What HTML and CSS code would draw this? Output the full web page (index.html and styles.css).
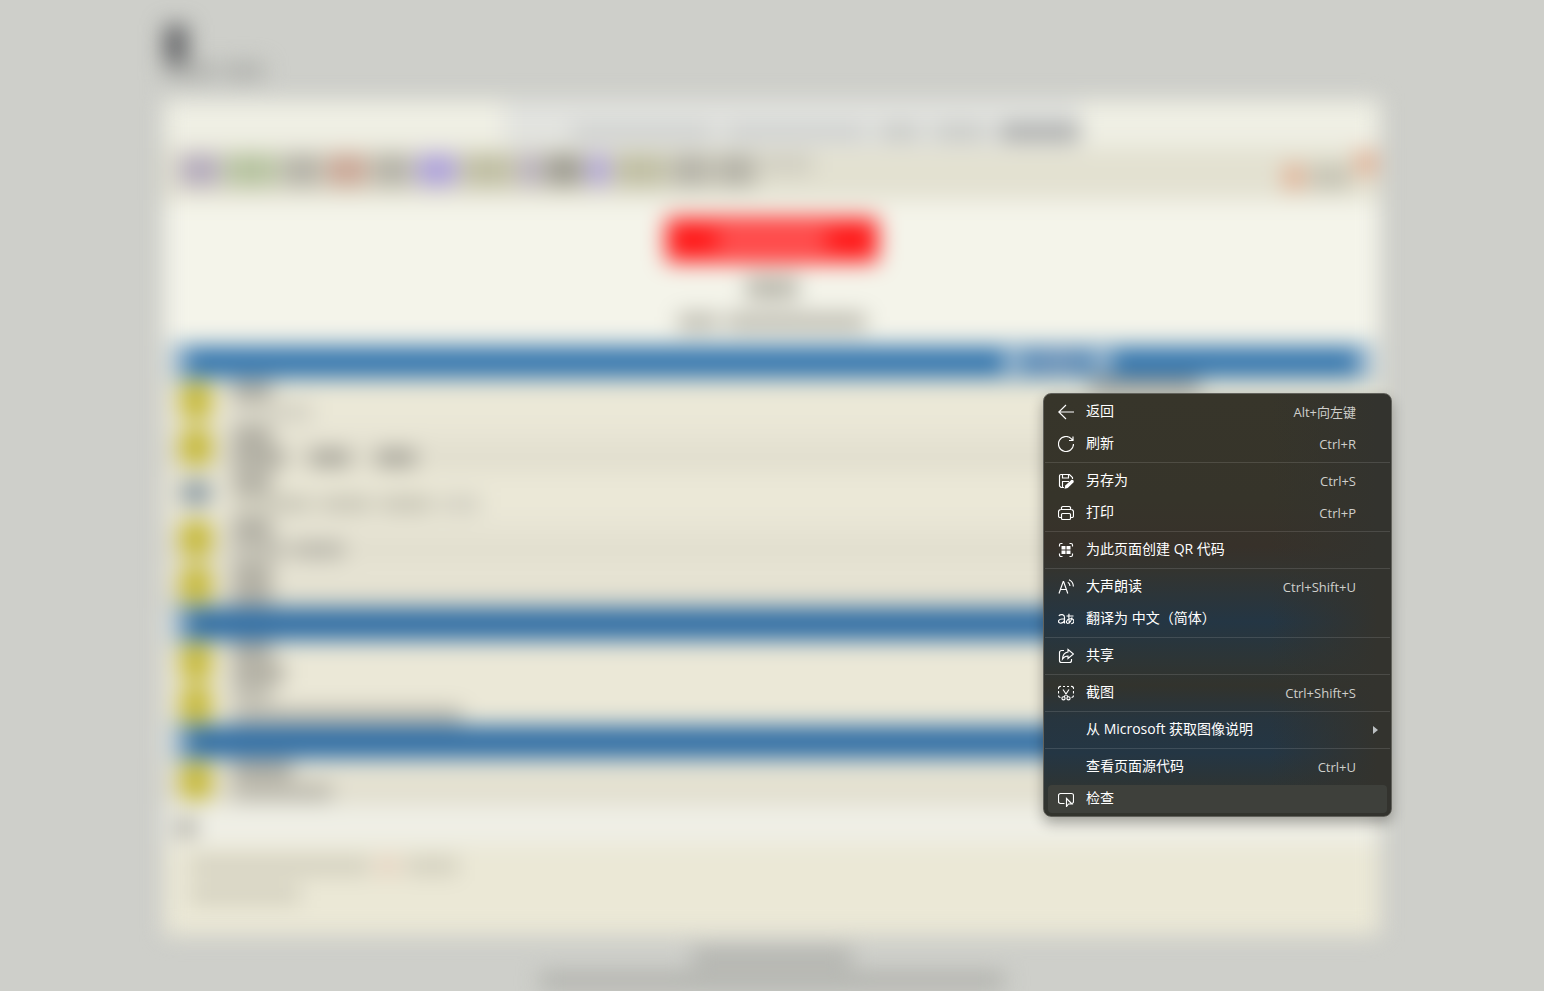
FILE: index.html
```html
<!DOCTYPE html>
<html lang="zh-CN">
<head>
<meta charset="utf-8">
<title>右键菜单</title>
<link rel="stylesheet" href="styles.css">
</head>
<body>
<div class="page" aria-hidden="true">
  <header class="masthead">
    <i class="smudge logo"></i>
    <div class="line tagline"><i class="smudge w50"></i><i class="smudge w40"></i></div>
  </header>
  <main class="panel">
    <div class="notice"><div class="notice-tint">
      <i class="smudge w150 pale"></i><i class="smudge w150 pale"></i><i class="smudge w40"></i><i class="smudge w50 mid"></i><i class="smudge w80 dark"></i>
    </div></div>
    <div class="nav">
      <div class="nav-links">
        <i class="smudge w40 violet"></i><i class="smudge w50 green"></i><i class="smudge w40 mid"></i><i class="smudge w40 rust"></i><i class="smudge w40 mid"></i><i class="smudge w40 purple"></i><i class="smudge w50 olive"></i><i class="smudge w20 violet"></i><i class="smudge w40 dark"></i><i class="smudge w20 purple"></i><i class="smudge w50 olive"></i><i class="smudge w40 mid"></i><i class="smudge w40 mid"></i><i class="smudge w50 pale high"></i>
      </div>
      <div class="nav-user"><i class="smudge w20 orange"></i><i class="smudge w40"></i><i class="smudge w20 orange high"></i></div>
    </div>
    <section class="hero">
      <div class="cta"><i class="cta-text"></i></div>
      <i class="smudge w50 mid tall"></i>
      <div class="line"><i class="smudge w40 mid"></i><i class="smudge w150 mid"></i></div>
    </section>
    <div class="bar"><i class="bar-start"></i><i class="bar-fill"></i><i class="bar-text w20"></i><i class="bar-dark w50"></i><i class="bar-text w20"></i><i class="bar-rest"></i><i class="bar-start"></i></div>
    <section class="group">
      <div class="row"><i class="badge"></i><div class="copy"><i class="smudge w40 dark"></i><i class="smudge w80 pale"></i></div><i class="smudge w110 dark last-post"></i></div>
      <div class="row shade"><i class="badge"></i><div class="copy"><i class="smudge w40 dark"></i><div class="line spread"><i class="smudge w50 dark"></i><i class="smudge w40 dark"></i><i class="smudge w40 dark"></i></div></div></div>
      <div class="row"><i class="badge read"></i><div class="copy"><i class="smudge w40 dark"></i><div class="line"><i class="smudge w80"></i><i class="smudge w50"></i><i class="smudge w50"></i><i class="smudge w40 pale"></i></div></div></div>
      <div class="row shade"><i class="badge"></i><div class="copy"><i class="smudge w40 dark"></i><div class="line"><i class="smudge w50 mid"></i><i class="smudge w50 mid"></i></div></div></div>
      <div class="row shade"><i class="badge"></i><div class="copy"><i class="smudge w40 dark"></i><i class="smudge w40 dark"></i></div></div>
    </section>
    <div class="bar deep"><i class="bar-start"></i><i class="bar-fill"></i><i class="bar-text w20"></i><i class="bar-rest"></i></div>
    <section class="group compact">
      <div class="row"><i class="badge"></i><div class="copy"><i class="smudge w40 dark"></i><i class="smudge w50 dark"></i></div></div>
      <div class="row"><i class="badge"></i><div class="copy"><i class="smudge w40 mid"></i><i class="smudge w230 mid"></i></div></div>
    </section>
    <div class="bar deep"><i class="bar-start"></i><i class="bar-fill"></i><i class="bar-text w20"></i><i class="bar-rest"></i></div>
    <section class="group">
      <div class="row shade"><i class="badge"></i><div class="copy"><i class="smudge w60 dark"></i><i class="smudge w100 mid"></i></div></div>
    </section>
    <div class="heading"><i class="smudge w20 dark"></i></div>
    <section class="stats">
      <div class="line"><i class="smudge w190"></i><i class="smudge w20 blush"></i><i class="smudge w50"></i></div>
      <i class="smudge w110"></i>
    </section>
  </main>
  <footer class="footer"><i class="smudge w160 dim"></i><i class="smudge w470 dim"></i></footer>
</div>

<div class="menu" role="menu">
  <button class="item" role="menuitem">
    <svg class="icon" viewBox="0 0 16 16"><path d="M8 1 .8 8 8 15M1 8h15"/></svg>
    <span class="label">返回</span><kbd class="keys">Alt+向左键</kbd>
  </button>
  <button class="item" role="menuitem">
    <svg class="icon" viewBox="0 0 16 16"><path d="M15.5 8A7.5 7.5 0 1 1 13.2 2.6L15 4.500M15 .5v4h-4"/></svg>
    <span class="label">刷新</span><kbd class="keys">Ctrl+R</kbd>
  </button>
  <hr class="rule">
  <button class="item" role="menuitem">
    <svg class="icon" viewBox="0 0 16 16"><path d="M6 14.500H3L1.500 13V3A1.500 1.500 0 0 1 3 1.500h8.500L14.500 4.500V6M4.500 1.500V5h6V1.500M4.500 14.500v-6H11"/><path class="solid" d="m6.500 15.800.8-3.300 5.700-5.300c1.600-1.300 3.600.6 2.400 2.200l-5.700 5.500z"/></svg>
    <span class="label">另存为</span><kbd class="keys">Ctrl+S</kbd>
  </button>
  <button class="item" role="menuitem">
    <svg class="icon" viewBox="0 0 16 16"><path d="M3.500 4.500v-1A1.500 1.500 0 0 1 5 1.500h6a1.500 1.500 0 0 1 1.500 2v1M3.500 12.500H2A1.500 1.500 0 0 1 .5 11V7A2.500 2.500 0 0 1 3 4.500h10A2.500 2.500 0 0 1 15.500 7v4a1.500 1.500 0 0 1-1.500 1.500h-1.500"/><rect x="3.500" y="8.500" width="9" height="6" rx="1"/></svg>
    <span class="label">打印</span><kbd class="keys">Ctrl+P</kbd>
  </button>
  <hr class="rule">
  <button class="item" role="menuitem">
    <svg class="icon" viewBox="0 0 16 16"><path d="M4.500 1.500H3A1.500 1.500 0 0 0 1.500 3v1.500M11.500 1.500H13A1.500 1.500 0 0 1 14.500 3v1.500M4.500 14.500H3A1.500 1.500 0 0 1 1.500 13v-1.500M11.500 14.500H13a1.500 1.500 0 0 0 1.500-1.500v-1.500"/><path class="solid" d="M3.500 4h4v3.500h-4zM8.500 4h4v3.500h-4zM3.500 8.500h4V12h-4zM8.500 8.500h4V12h-4z"/></svg>
    <span class="label">为此页面创建 QR 代码</span>
  </button>
  <hr class="rule">
  <button class="item" role="menuitem">
    <svg class="icon" viewBox="0 0 16 16"><path d="m1 14.500 4.200-12h.4l4.200 12M2.500 10.500h5.800M9.800 3.300c1.300.7 2.100 2 2.200 3.700M11 .8c2.600 1.100 4.200 3.700 4.400 6.700"/></svg>
    <span class="label">大声朗读</span><kbd class="keys">Ctrl+Shift+U</kbd>
  </button>
  <button class="item" role="menuitem">
    <svg class="icon" viewBox="0 0 16 16"><path d="M.8 4.700c2-1.700 5.700-1.500 5.700 1.500V12.500M6.500 7.700C3 7.700.5 8.200.5 10.300c0 2.800 5 2.500 6-.8M8.500 5h7M11 2.800c-.3 3.200-.2 6.700.6 9.500M14 6.300c-.8 3.500-2.800 6-4.400 6-2.200 0-1.300-4.300 2.600-4.500 5-.2 4.600 4.500 1 5"/></svg>
    <span class="label">翻译为 中文（简体）</span>
  </button>
  <hr class="rule">
  <button class="item" role="menuitem">
    <svg class="icon" viewBox="0 0 16 16"><path d="M6 2.500H3.500a2 2 0 0 0-2 2v8a2 2 0 0 0 2 2h8a2 2 0 0 0 2-2V11M10 1.500l5.500 4.500L10 10.500V8c-2.500 0-4 .8-5.500 3 .2-4 2-6.500 5.500-7z"/></svg>
    <span class="label">共享</span>
  </button>
  <hr class="rule">
  <button class="item" role="menuitem">
    <svg class="icon" viewBox="0 0 16 16"><path d="M3 1.500A2 2 0 0 0 .5 4M5 1.500h2M9 1.500h2M13 1.500A2 2 0 0 1 15.500 4M.5 6v2.500M15.500 6v2.500M.5 10.500c0 1.500.8 2 2 2M15.500 10.500c0 1.500-.8 2-2 2M5 4.500l5 7.500M11 4.500 6 12"/><circle cx="5.500" cy="13.300" r="1.600"/><circle cx="10.500" cy="13.300" r="1.600"/></svg>
    <span class="label">截图</span><kbd class="keys">Ctrl+Shift+S</kbd>
  </button>
  <hr class="rule">
  <button class="item" role="menuitem" aria-haspopup="true">
    <span class="icon"></span>
    <span class="label">从 Microsoft 获取图像说明</span>
    <svg class="arrow" viewBox="0 0 5 8"><path d="M0 0 5 4 0 8z"/></svg>
  </button>
  <hr class="rule">
  <button class="item" role="menuitem">
    <span class="icon"></span>
    <span class="label">查看页面源代码</span><kbd class="keys">Ctrl+U</kbd>
  </button>
  <button class="item active" role="menuitem">
    <svg class="icon" viewBox="0 0 16 16"><path d="M6.500 12.500h-4a2 2 0 0 1-2-2v-6a2 2 0 0 1 2-2h11a2 2 0 0 1 2 2v6a2 2 0 0 1-1.500 2M8.500 7.500v8l2-2.500h3.500z"/></svg>
    <span class="label">检查</span>
  </button>
</div>
</body>
</html>
```
FILE: styles.css
```css
* { box-sizing: border-box; }

body {
  margin: 0;
  min-height: 100vh;
  overflow: hidden;
  position: relative;
  background: #cecfca;
  font-family: "Open Sans", "Noto Sans CJK SC", sans-serif;
}

/* Out-of-focus page behind the menu */
.page {
  height: 100vh;
  padding: 0 164px;
  filter: blur(11px);
}

.masthead {
  height: 100px;
  padding-top: 25px;
}

.smudge {
  display: block;
  flex: none;
  height: 16px;
  background: #c4c2b3;
}

.smudge.logo { width: 24px; height: 38px; background: #66676a; }
.line { display: flex; gap: 8px; }
.spread { gap: 26px; }
.tagline .smudge { background: #aeafab; }

.w20 { width: 20px; }
.w40 { width: 40px; }
.w50 { width: 52px; }
.w60 { width: 60px; }
.w80 { width: 80px; }
.w100 { width: 100px; }
.w110 { width: 110px; }
.w150 { width: 140px; }
.w160 { width: 160px; }
.w190 { width: 180px; }
.w230 { width: 230px; }
.w470 { width: 464px; }

.pale { background: #cfcdc0; }
.mid { background: #b5b3a8; }
.dark { background: #a09e94; }
.dim { background: #adaea9; }
.violet { background: #b5acbd; }
.purple { background: #afa3db; }
.green { background: #b6c3a0; }
.olive { background: #bfbea3; }
.rust { background: #caa797; }
.orange { background: #e2ae92; }
.tall { height: 22px; }

.panel { background: #f4f4ea; }

.notice {
  display: flex;
  justify-content: center;
  height: 48px;
  padding-left: 40px;
  background: #efefe4;
}

.notice-tint {
  display: flex;
  align-items: flex-end;
  justify-content: flex-end;
  gap: 14px;
  width: 576px;
  padding-bottom: 8px;
  background: #e2e3df;
}

.notice-tint .smudge { background: #c6c8c5; }
.notice-tint .pale { background: #cdcfce; }
.notice-tint .dark { background: #a4a6a6; }

.nav {
  display: flex;
  justify-content: space-between;
  align-items: center;
  height: 52px;
  padding: 0 4px 8px 16px;
  background: #e3e1d1;
}

.nav-links { display: flex; gap: 5px; }
.nav-links .smudge { height: 32px; }
.nav-user { display: flex; align-items: flex-end; gap: 6px; }
.nav-user .smudge { height: 24px; }
.nav .nav-links .high { height: 20px; }
.nav-user .high { margin-bottom: 14px; }

.hero {
  display: flex;
  flex-direction: column;
  align-items: center;
  gap: 15px;
  height: 146px;
  padding-top: 18px;
}

.cta {
  display: flex;
  align-items: center;
  justify-content: center;
  width: 212px;
  height: 44px;
  border-radius: 4px;
  background: #ff1c1c;
}

.cta-text { width: 110px; height: 18px; background: #ff6464; }

.bar {
  display: flex;
  align-items: center;
  gap: 8px;
  height: 32px;
  margin: 0 8px;
  background: #3476ae;
}

.bar.deep { background: #2d6ca4; }
.bar-start { width: 16px; height: 22px; background: #a0bad0; }
.bar-fill { flex: 7; }
.bar-rest { flex: 2; }
.bar-text { height: 20px; background: #b4c8d8; }
.bar-dark { height: 20px; background: #7799bd; }

.group { background: #ebe8d7; }

.row {
  display: flex;
  align-items: center;
  gap: 20px;
  height: 46px;
  padding-left: 16px;
}

.compact .row { height: 43px; }
.shade { background: linear-gradient(#eae7d7, #dfdccc); }
.badge { flex: none; width: 32px; height: 38px; border-radius: 10px; background: #c6b938; }
.badge.read { height: 24px; background: #8696a0; }
.copy { display: flex; flex-direction: column; gap: 6px; }
.last-post { align-self: flex-start; margin: 0 180px 0 auto; }

.heading {
  height: 40px;
  padding: 16px 12px;
  background: #efefe6;
}

.stats {
  display: flex;
  flex-direction: column;
  gap: 12px;
  height: 91px;
  padding: 14px 26px;
  background: #ebe8d6;
}

.stats .smudge { background: #cfccbb; }
.stats .blush { background: #e6cdbb; }

.footer {
  display: flex;
  flex-direction: column;
  align-items: center;
  gap: 8px;
  padding-top: 14px;
}

/* Context menu */
.menu {
  position: absolute;
  top: 393px;
  left: 1043px;
  width: 349px;
  padding: 2px 0 1px;
  border: 1px solid #62625c;
  border-radius: 8px;
  background:
    linear-gradient(90deg, transparent 65%, #33332e 96%),
    linear-gradient(#37352a 0, #36342a 25%, #37312a 36%, #333430 42%, #243644 54%, #2d3536 63%, #32332d 69%, #27353f 77%, #243644 85%, #2f3432 94%, #33342d 100%);
  box-shadow: 0 6px 14px rgba(0, 0, 0, .32);
}

.item {
  display: flex;
  align-items: center;
  width: 100%;
  height: 32px;
  padding: 0 35px 0 14px;
  border: 0;
  background: transparent;
  color: #fff;
  font-family: inherit;
  font-size: 14px;
  line-height: 20px;
  text-align: left;
  position: relative;
}

.item.active {
  width: calc(100% - 8px);
  height: 28px;
  margin: 2px 4px;
  padding-left: 10px;
  border-radius: 4px;
  background: #3e403b;
}

.icon {
  flex: none;
  width: 16px;
  height: 16px;
  margin-right: 12px;
  fill: none;
  stroke: #fff;
  stroke-width: 1.15;
}

.icon .solid { fill: #fff; stroke: none; }
.label { flex: 1; white-space: nowrap; padding-bottom: 2px; }

.keys {
  color: #cfcfcb;
  font-family: inherit;
  font-size: 13px;
}

.arrow {
  position: absolute;
  right: 13px;
  width: 5px;
  height: 8px;
  fill: #bcc0c2;
}

.rule {
  height: 1px;
  margin: 2px 1px;
  border: 0;
  background: rgba(255, 255, 255, .12);
}
```
